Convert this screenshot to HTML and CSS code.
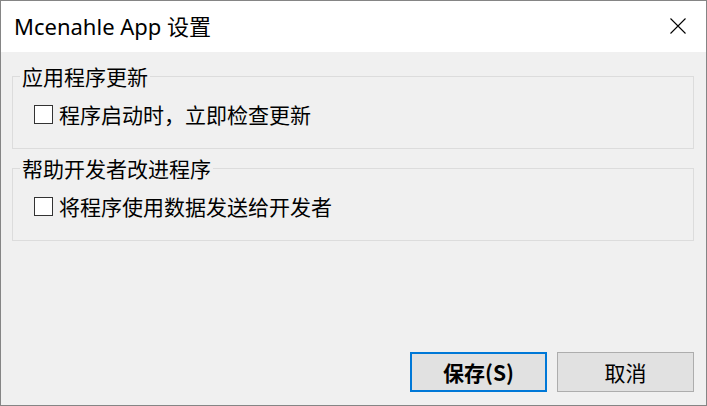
FILE: index.html
```html
<!DOCTYPE html>
<html lang="zh-CN">
<head>
<meta charset="utf-8">
<title>Mcenahle App 设置</title>
<link rel="stylesheet" href="styles.css">
</head>
<body>
<div class="window">
  <div class="titlebar">
    <span class="title">Mcenahle App 设置</span>
    <span class="close" aria-label="关闭">
      <svg width="16" height="16" viewBox="0 0 16 16"><path d="M0.5 0.5 L15.5 15.5 M15.5 0.5 L0.5 15.5" stroke="#000" stroke-width="1.1" fill="none"/></svg>
    </span>
  </div>
  <div class="content">
    <fieldset class="group">
      <legend>应用程序更新</legend>
      <label class="check"><span class="box"></span>程序启动时，立即检查更新</label>
    </fieldset>
    <fieldset class="group group-second">
      <legend>帮助开发者改进程序</legend>
      <label class="check"><span class="box"></span>将程序使用数据发送给开发者</label>
    </fieldset>
    <div class="footer">
      <button class="btn btn-primary">保存(S)</button>
      <button class="btn">取消</button>
    </div>
  </div>
</div>
</body>
</html>
```

FILE: styles.css
```css
* { box-sizing: border-box; }
html, body {
  margin: 0;
  padding: 0;
  background: #f0f0f0;
}
body {
  font-family: "Noto Sans", "Noto Sans CJK SC", sans-serif;
  color: #000;
}
.window {
  width: 707px;
  height: 406px;
  border: 1px solid #858585;
  background: #f0f0f0;
  display: flex;
  flex-direction: column;
}
.titlebar {
  height: 51px;
  background: #fff;
  display: flex;
  align-items: center;
  justify-content: space-between;
  padding: 0 20px 2px 13px;
}
.title {
  font-size: 22px;
  line-height: 24px;
}
.close {
  display: flex;
  width: 16px;
  height: 16px;
}
.content {
  flex: 1;
  display: flex;
  flex-direction: column;
  padding: 12px 12px 13px 11px;
  font-family: "Noto Sans CJK SC", "Noto Sans", sans-serif;
  font-size: 21px;
}
.group {
  margin: 0;
  border: 1px solid #dcdcdc;
  padding: 14px 0 22px 7px;
  min-width: 0;
}
.group-second {
  margin-top: 7px;
}
.group legend {
  padding: 0 2px;
  line-height: 24px;
  font-size: 21px;
}
.check {
  display: flex;
  align-items: center;
  gap: 6px;
  height: 24px;
  line-height: 24px;
  padding-left: 14px;
}
.box {
  width: 19px;
  height: 19px;
  border: 1px solid #333;
  background: #fff;
  flex: none;
}
.footer {
  margin-top: auto;
  display: flex;
  justify-content: flex-end;
  gap: 10px;
}
.btn {
  width: 137px;
  height: 40px;
  background: #e1e1e1;
  border: 1px solid #adadad;
  font-family: "Noto Sans CJK SC", "Noto Sans", sans-serif;
  font-size: 21px;
  color: #000;
  padding: 0;
}
.btn-primary {
  border: 2px solid #0078d7;
  font-weight: bold;
}
```
